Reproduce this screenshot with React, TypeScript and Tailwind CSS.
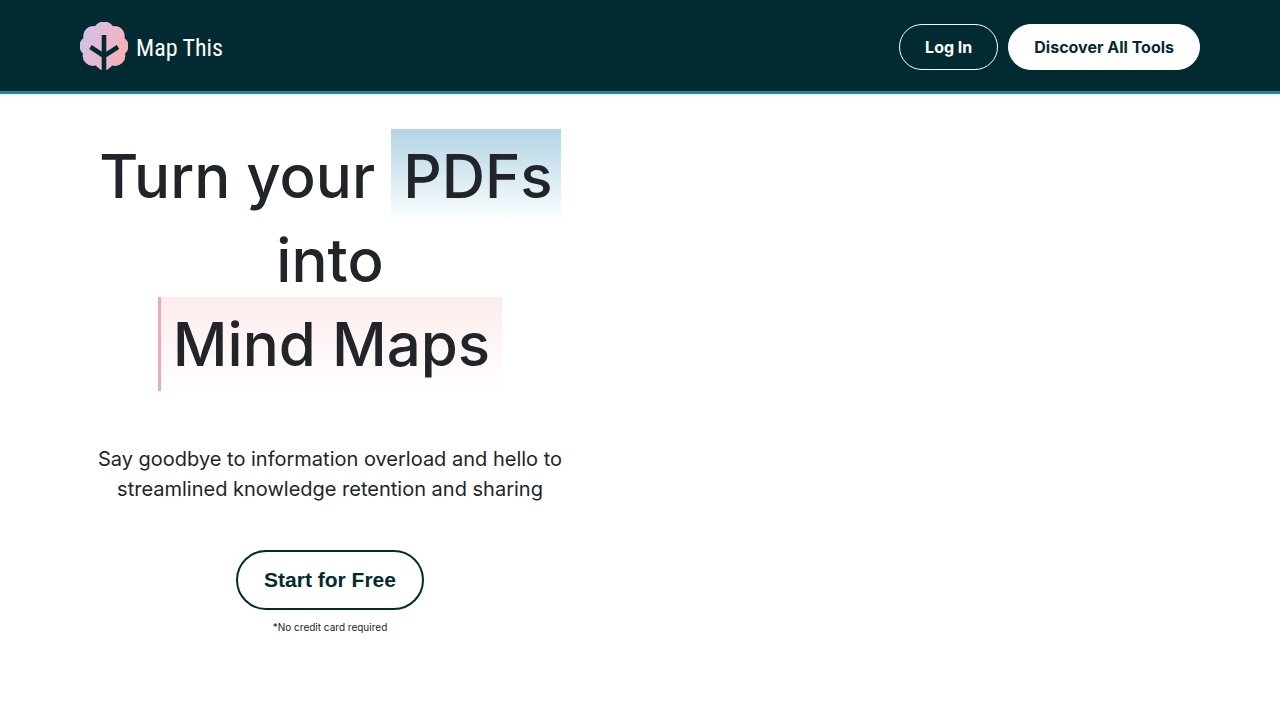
function TreeMark() {
  return (
    <svg viewBox="0 0 48 48" className="h-12 w-12" aria-hidden="true">
      <defs>
        <linearGradient id="crown" gradientUnits="userSpaceOnUse" x1="2" y1="16" x2="46" y2="32">
          <stop offset="0" stopColor="#cfc1ea" />
          <stop offset="0.5" stopColor="#e9b9cd" />
          <stop offset="1" stopColor="#f5b0b4" />
        </linearGradient>
      </defs>
      <path
        d="M15 4.2A11 11 0 0 1 33 4.2A10 10 0 0 1 44.5 16A10 10 0 0 1 45 31.5A10 10 0 0 1 32.5 43.5L27 48H21L15.5 43.5A10 10 0 0 1 3 31.5A10 10 0 0 1 3.5 16A10 10 0 0 1 15 4.2Z"
        fill="url(#crown)"
      />
      <path d="M24 13V50M10.5 25L24 34L38 25" fill="none" stroke="#022b31" strokeWidth="4.6" />
    </svg>
  );
}

function Header() {
  return (
    <header className="border-b-3 border-[#1b8a9c] bg-[#022b31]">
      <div className="flex items-center justify-between px-20 pt-[22px] pb-[21px]">
        <a href="#" className="flex items-center gap-2 text-white">
          <TreeMark />
          <span className="pt-1 font-['Roboto_Condensed',sans-serif] text-2xl leading-11">Map This</span>
        </a>
        <nav className="flex items-center gap-2.5 pt-0.5">
          <button className="rounded-full border border-white px-[25px] py-2.5 text-base font-bold text-white">
            Log In
          </button>
          <button className="rounded-full border border-white bg-white px-[25px] py-2.5 text-base font-bold text-[#022b31]">
            Discover All Tools
          </button>
        </nav>
      </div>
    </header>
  );
}

function Hero() {
  return (
    <main className="grid grid-cols-2 px-20 pt-10">
      <section className="mr-15 flex flex-col items-center text-center">
        <h1 className="text-[60px] leading-[84px] font-medium">
          Turn your{" "}
          <span className="bg-linear-to-b from-[#b1d5e5] to-white py-[11px] pr-2 pl-3">PDFs</span> into
          <br />
          <span className="border-l-3 border-[#f0a9ad] bg-linear-to-b from-[#fdeced] to-white px-3 py-[11px]">
            Mind Maps
          </span>
        </h1>
        <p className="mt-[58px] text-xl leading-[30px]">
          Say goodbye to information overload and hello to streamlined knowledge retention and sharing
        </p>
        <button className="mt-[46px] rounded-full border-2 border-[#022b31] px-[26px] py-[13px] font-['Liberation_Sans',sans-serif] text-[21px] leading-[30px] font-bold text-[#022b31]">
          Start for Free
        </button>
        <small className="mt-[9px] text-[10px] leading-4">*No credit card required</small>
      </section>
    </main>
  );
}

export default function App() {
  return (
    <div className="min-h-screen bg-white font-['Inter',sans-serif] text-[#212529]">
      <Header />
      <Hero />
    </div>
  );
}
